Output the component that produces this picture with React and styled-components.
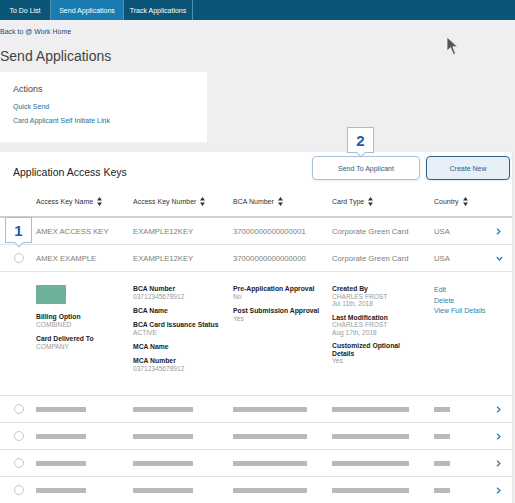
import React from 'react';
import styled, { createGlobalStyle } from 'styled-components';

const Global = createGlobalStyle`
  html, body { margin: 0; padding: 0; background: #efeff1; }
  body {
    font-family: "Liberation Sans", Arial, Helvetica, sans-serif;
    width: 515px; height: 503px; overflow: hidden; position: relative;
  }
  * { box-sizing: border-box; }
`;

const COLS = '36px 97px 100px 99px 102px 56px 22px';

const Nav = styled.nav`
  display: flex;
  height: 20px;
  background: #0b5678;
`;
const Tab = styled.div`
  width: ${p => p.$w}px;
  display: flex;
  align-items: center;
  justify-content: center;
  color: #fff;
  font-size: 7px;
  border-right: 1px solid #4f8fb2;
  background: ${p => (p.$active ? '#1a7bb0' : 'transparent')};
`;

const BackLink = styled.div`
  padding-top: 7px;
  font-size: 7px;
  line-height: 9px;
  color: #1d4a72;
`;
const Heading = styled.h1`
  margin: 12px 0 0;
  font-size: 14px;
  line-height: 16px;
  font-weight: normal;
  color: #444;
`;

const ActionsCard = styled.section`
  margin-top: 8px;
  width: 207px;
  height: 70px;
  background: #fff;
  padding: 12px 13px 0;
`;
const CardTitle = styled.div`
  font-size: 9px;
  line-height: 11px;
  color: #444;
  margin-bottom: 7px;
`;
const ActionLink = styled.div`
  font-size: 7px;
  line-height: 9px;
  color: #1f6f92;
  margin-bottom: 5px;
`;

const Panel = styled.section`
  position: relative;
  margin-top: 10px;
  width: 512px;
  background: #fff;
  box-shadow: 0 1px 2px rgba(0, 0, 0, 0.12);
`;
const Toolbar = styled.div`
  display: flex;
  justify-content: space-between;
  height: 38px;
`;
const PanelTitle = styled.h2`
  margin: 0;
  padding: 14px 0 0 13px;
  font-size: 10.5px;
  line-height: 12px;
  font-weight: normal;
  color: #222;
`;
const Buttons = styled.div`
  display: flex;
  gap: 6px;
  padding: 4px 2px 0 0;
`;
const Button = styled.button`
  width: ${p => p.$w}px;
  height: 24px;
  border-radius: 4px;
  font-family: inherit;
  font-size: 7px;
  color: #2b5b82;
  background: ${p => (p.$primary ? '#e7f0f8' : '#fff')};
  border: ${p => (p.$primary ? '1.5px solid #2d5f88' : '1px solid #a9c0d6')};
  box-shadow: 0 1px 2px rgba(0, 0, 0, 0.08);
  padding: 0;
`;

const Row = styled.div`
  display: grid;
  grid-template-columns: ${COLS};
  align-items: center;
  height: ${p => p.$h || 27}px;
  border-bottom: ${p => (p.$head ? '2px solid #cfcfcf' : '1px solid #e4e4e4')};
  font-size: ${p => (p.$head ? '7px' : '7.7px')};
  color: ${p => (p.$head ? '#333' : '#7d7d7d')};
`;
const HeadCell = styled.div`
  display: flex;
  align-items: center;
  gap: 4px;
  padding-bottom: 3px;
`;
const Cell = styled.div`
  white-space: nowrap;
`;
const Radio = styled.span`
  justify-self: center;
  margin-left: 1px;
  width: 10px;
  height: 10px;
  border-radius: 50%;
  border: 1px solid #c9c9c9;
  background: #fff;
`;
const Bar = styled.div`
  width: ${p => p.$w}px;
  height: 5px;
  background: #b9b9b9;
`;
const ChevronBox = styled.div`
  display: flex;
  justify-content: flex-start;
  padding-left: 6px;
`;

const Detail = styled.div`
  display: grid;
  grid-template-columns: ${COLS};
  height: 124px;
  padding-top: 12px;
  border-bottom: 1px solid #e4e4e4;
  align-items: start;
`;
const DetailCol = styled.div`
  padding-top: ${p => p.$pt || 1}px;
`;
const Swatch = styled.div`
  width: 30px;
  height: 19px;
  border-radius: 1px;
  background: #6db19a;
  margin-bottom: 9px;
`;
const Field = styled.div`
  margin-bottom: 6px;
  max-width: ${p => p.$max || 200}px;
`;
const Label = styled.div`
  font-size: 6.8px;
  line-height: ${p => p.$lh || 8}px;
  font-weight: bold;
  color: #222;
  white-space: ${p => (p.$wrap ? 'normal' : 'nowrap')};
`;
const Value = styled.div`
  font-size: 6.6px;
  line-height: ${p => p.$lh || 8}px;
  color: #9a9a9a;
  white-space: nowrap;
`;
const DetailLink = styled.div`
  font-size: 7px;
  line-height: 10.5px;
  color: #2f80ae;
  white-space: nowrap;
`;

const Callout = styled.div`
  position: absolute;
  left: ${p => p.$x}px;
  top: ${p => p.$y}px;
  width: 27px;
  height: 26px;
  background: #fff;
  border: 1px solid #9dbfdc;
  display: flex;
  align-items: center;
  justify-content: center;
  font-size: 15px;
  font-weight: bold;
  color: #1c5ea8;
  z-index: 2;
  &::after {
    content: '';
    position: absolute;
    left: 50%;
    bottom: -4px;
    width: 6px;
    height: 6px;
    background: #fff;
    border-right: 1px solid #9dbfdc;
    border-bottom: 1px solid #9dbfdc;
    transform: translateX(-50%) rotate(45deg);
  }
`;

const Cursor = styled.svg`
  position: absolute;
  left: 446px;
  top: 36px;
`;

const SortIcon = () => (
  <svg width="5" height="9" viewBox="0 0 5 9">
    <path d="M2.5 0 L5 3.6 L0 3.6 Z M2.5 9 L5 5.4 L0 5.4 Z" fill="#333" />
  </svg>
);

const ChevronRight = () => (
  <svg width="5" height="7" viewBox="0 0 5 7">
    <path d="M1 0.8 L4 3.5 L1 6.2" stroke="#2a80aa" strokeWidth="1.3" fill="none" />
  </svg>
);
const ChevronDown = () => (
  <svg width="7" height="5" viewBox="0 0 7 5">
    <path d="M0.8 1 L3.5 4 L6.2 1" stroke="#2a80aa" strokeWidth="1.3" fill="none" />
  </svg>
);

const headers = ['Access Key Name', 'Access Key Number', 'BCA Number', 'Card Type', 'Country'];

const rows = [
  { name: 'AMEX ACCESS KEY', num: 'EXAMPLE12KEY', bca: '37000000000000001', type: 'Corporate Green Card', country: 'USA', open: false },
  { name: 'AMEX EXAMPLE', num: 'EXAMPLE12KEY', bca: '37000000000000000', type: 'Corporate Green Card', country: 'USA', open: true },
];

export default function App() {
  return (
    <>
      <Global />
      <Nav>
        <Tab $w={51}>To Do List</Tab>
        <Tab $w={73} $active>Send Applications</Tab>
        <Tab $w={69}>Track Applications</Tab>
      </Nav>
      <BackLink>Back to @ Work Home</BackLink>
      <Heading>Send Applications</Heading>
      <ActionsCard>
        <CardTitle>Actions</CardTitle>
        <ActionLink>Quick Send</ActionLink>
        <ActionLink>Card Applicant Self Initiate Link</ActionLink>
      </ActionsCard>

      <Panel>
        <Toolbar>
          <PanelTitle>Application Access Keys</PanelTitle>
          <Buttons>
            <Button $w={108}>Send To Applicant</Button>
            <Button $w={84} $primary>Create New</Button>
          </Buttons>
        </Toolbar>
        <Callout $x={347} $y={-25}>2</Callout>

        <Row $head $h={28}>
          <div />
          {headers.map(h => (
            <HeadCell key={h}>
              {h}
              <SortIcon />
            </HeadCell>
          ))}
          <div />
        </Row>

        {rows.map((r, i) => (
          <React.Fragment key={i}>
            <Row>
              <Radio />
              <Cell>{r.name}</Cell>
              <Cell>{r.num}</Cell>
              <Cell>{r.bca}</Cell>
              <Cell>{r.type}</Cell>
              <Cell>{r.country}</Cell>
              <ChevronBox>{r.open ? <ChevronDown /> : <ChevronRight />}</ChevronBox>
            </Row>
          </React.Fragment>
        ))}
        <Callout $x={5} $y={65}>1</Callout>

        <Detail>
          <div />
          <DetailCol $pt={0}>
            <Swatch />
            <Field>
              <Label>Billing Option</Label>
              <Value>COMBINED</Value>
            </Field>
            <Field>
              <Label>Card Delivered To</Label>
              <Value>COMPANY</Value>
            </Field>
          </DetailCol>
          <DetailCol>
            <Field>
              <Label>BCA Number</Label>
              <Value>03712345678912</Value>
            </Field>
            <Field>
              <Label>BCA Name</Label>
            </Field>
            <Field>
              <Label>BCA Card Issuance Status</Label>
              <Value>ACTIVE</Value>
            </Field>
            <Field>
              <Label>MCA Name</Label>
            </Field>
            <Field>
              <Label>MCA Number</Label>
              <Value>03712345678912</Value>
            </Field>
          </DetailCol>
          <DetailCol>
            <Field>
              <Label>Pre-Application Approval</Label>
              <Value>No</Value>
            </Field>
            <Field>
              <Label>Post Submission Approval</Label>
              <Value>Yes</Value>
            </Field>
          </DetailCol>
          <DetailCol>
            <Field>
              <Label $lh={7.5}>Created By</Label>
              <Value $lh={7.5}>CHARLES FROST</Value>
              <Value $lh={7.5}>Jul 11th, 2018</Value>
            </Field>
            <Field>
              <Label $lh={7.5}>Last Modification</Label>
              <Value $lh={7.5}>CHARLES FROST</Value>
              <Value $lh={7.5}>Aug 17th, 2018</Value>
            </Field>
            <Field $max={78}>
              <Label $lh={7.5} $wrap>Customized Optional Details</Label>
              <Value $lh={7.5}>Yes</Value>
            </Field>
          </DetailCol>
          <DetailCol $pt={0}>
            <DetailLink>Edit</DetailLink>
            <DetailLink>Delete</DetailLink>
            <DetailLink>View Full Details</DetailLink>
          </DetailCol>
          <div />
        </Detail>

        {[0, 1, 2, 3].map(i => (
          <Row key={i}>
            <Radio />
            <Bar $w={50} />
            <Bar $w={60} />
            <Bar $w={74} />
            <Bar $w={77} />
            <Bar $w={16} />
            <ChevronBox><ChevronRight /></ChevronBox>
          </Row>
        ))}
      </Panel>

      <Cursor width="13" height="20" viewBox="0 0 13 20">
        <path d="M1 1 L1 15 L4.5 11.5 L7.5 18.5 L9.5 17.5 L6.8 10.8 L11.5 10.8 Z" fill="#555" stroke="#f2f2f2" strokeWidth="0.8" />
      </Cursor>
    </>
  );
}
